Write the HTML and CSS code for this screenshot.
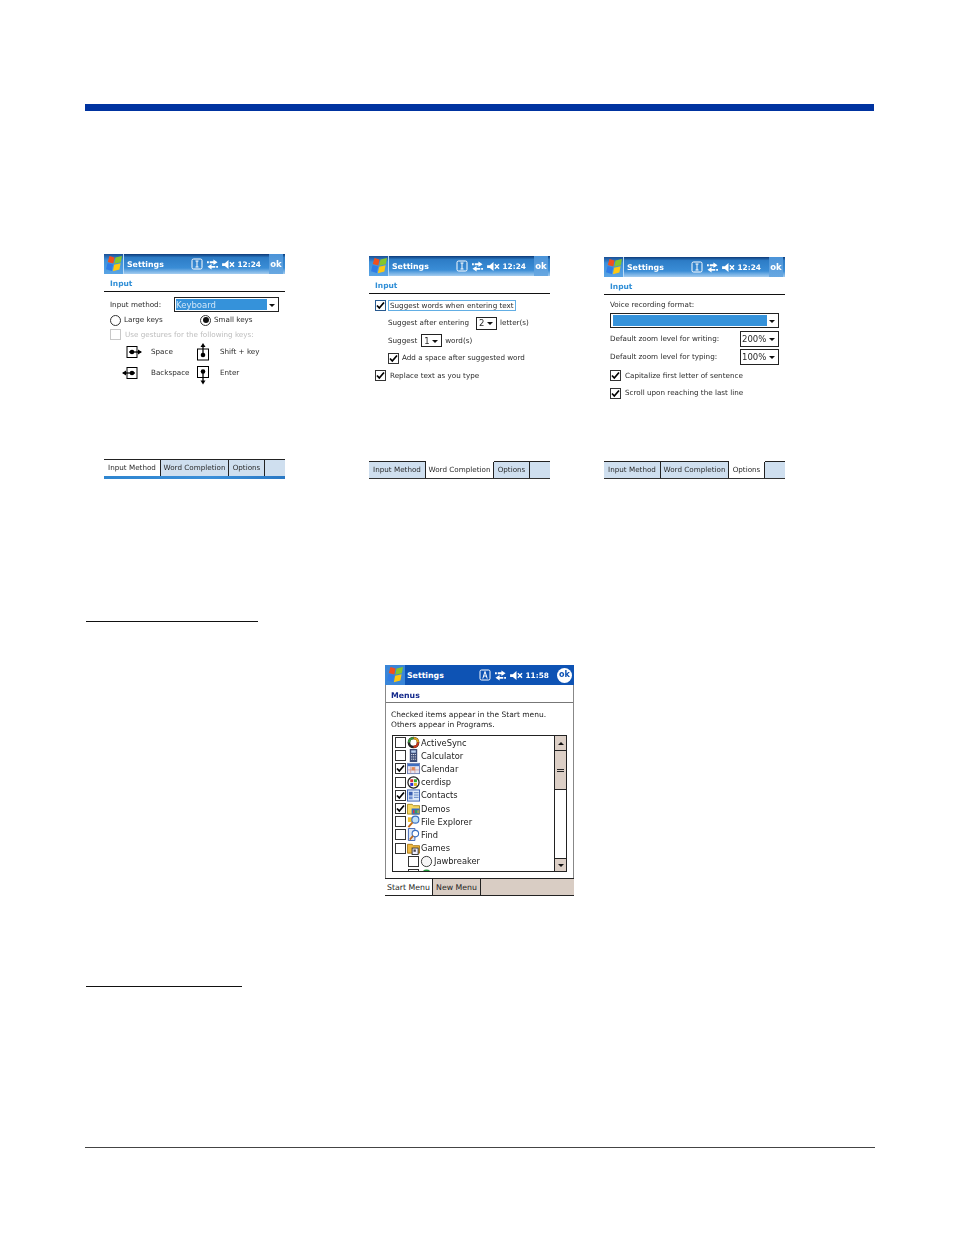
FILE: index.html
```html
<!DOCTYPE html>
<html lang="en">
<head>
<meta charset="utf-8">
<title>Settings</title>
<link rel="stylesheet" href="styles.css">
</head>
<body>
<svg class="defs" width="0" height="0" aria-hidden="true">
  <defs>
    <symbol id="flag" viewBox="0 0 16 16">
      <path d="M3.500 0 8.500 1.500 7.300 7.600 1.800 6Z" fill="#f0501e"/>
      <path d="M9.500 1.500 16 0 14.800 6.300 8.300 7.800Z" fill="#86c62a"/>
      <path d="M1.600 7 7.100 8.600 5.900 15 0 13.300Z" fill="#2f7ce6"/>
      <path d="M8.100 8.800 14.600 7.300 13.400 13.600 6.900 15.300Z" fill="#ffc810"/>
    </symbol>
    <symbol id="status-input" viewBox="0 0 12 12">
      <rect x="1" y="1" width="10" height="10" rx="1.500" fill="none" stroke="#fff"/>
      <path d="M4.500 3h3M6 3v6M4.500 9h3" stroke="#fff" fill="none"/>
    </symbol>
    <symbol id="status-a" viewBox="0 0 12 12">
      <rect x="1" y="1" width="10" height="10" rx="1.500" fill="none" stroke="#fff"/>
      <path d="M3.800 9.500 6 2.500l2.200 7M4.600 7h2.800" stroke="#fff" fill="none"/>
    </symbol>
    <symbol id="status-sync" viewBox="0 0 12 12">
      <path d="M3 2.500h4v2H3zM0 2.500h2v2H0zM7 .5l4.500 3-4.500 3z" fill="#fff"/>
      <path d="M5 7.500h4v2H5zM10 7.500h2v2h-2zM5 5.500.5 8.500l4.500 3z" fill="#fff"/>
    </symbol>
    <symbol id="status-sound" viewBox="0 0 14 12">
      <path d="M0 4.500h3L7 1v10L3 7.500H0z" fill="#fff"/>
      <path d="M8.500 3.500l4.500 5M13 3.500l-4.500 5" stroke="#fff" stroke-width="1.500" fill="none"/>
    </symbol>
    <symbol id="check" viewBox="0 0 11 11">
      <path d="M2 5.500 4.300 8 9 2.500" fill="none" stroke="#000" stroke-width="1.700"/>
    </symbol>
    <symbol id="g-space" viewBox="0 0 24 14">
      <rect x="6" y="1.500" width="10" height="11" fill="none" stroke="#000"/>
      <path d="M8 7h12" stroke="#000" stroke-width="1.300"/>
      <circle cx="11" cy="7" r="2.300"/><path d="M17 4.500 21 7l-4 2.500z"/>
    </symbol>
    <symbol id="g-back" viewBox="0 0 24 14">
      <rect x="6" y="1.500" width="10" height="11" fill="none" stroke="#000"/>
      <path d="M2 7h12" stroke="#000" stroke-width="1.300"/>
      <circle cx="11" cy="7" r="2.300"/><path d="M5 4.500 1 7l4 2.500z"/>
    </symbol>
    <symbol id="g-shift" viewBox="0 0 14 18">
      <rect x="1.500" y="6" width="11" height="11" fill="none" stroke="#000"/>
      <path d="M7 3v10" stroke="#000" stroke-width="1.300"/>
      <circle cx="7" cy="12" r="2.300"/><path d="M4.500 4 7 0l2.500 4z"/>
    </symbol>
    <symbol id="g-enter" viewBox="0 0 14 20">
      <rect x="1.500" y="1.500" width="11" height="11" fill="none" stroke="#000"/>
      <path d="M7 6v10" stroke="#000" stroke-width="1.300"/>
      <circle cx="7" cy="6.500" r="2.300"/><path d="M4.500 15.500 7 19.500l2.500-4z"/>
    </symbol>
    <symbol id="i-sync" viewBox="0 0 14 14">
      <circle cx="7" cy="7" r="6.300" fill="#222"/><circle cx="7" cy="7" r="3.500" fill="#fff"/>
      <path d="M7 1a6 6 0 0 1 6 6h-2.500A3.500 3.500 0 0 0 7 3.500z" fill="#e2a320"/>
      <path d="M1 7a6 6 0 0 1 6-6v2.500A3.500 3.500 0 0 0 3.500 7z" fill="#3e9a3e"/>
      <path d="M13 7a6 6 0 0 1-6 6v-2.500A3.500 3.500 0 0 0 10.500 7z" fill="#c8361c"/>
    </symbol>
    <symbol id="i-calc" viewBox="0 0 14 14">
      <rect x="3" y="0" width="8" height="14" fill="#3c4c78"/>
      <rect x="4.500" y="1.500" width="5" height="2.500" fill="#b8d0f0"/>
      <path d="M4.500 6h1.200M6.500 6h1.200M8.500 6h1M4.500 8.500h1.200M6.500 8.500h1.200M8.500 8.500h1M4.500 11h1.200M6.500 11h1.200M8.500 11h1" stroke="#fff"/>
    </symbol>
    <symbol id="i-cal" viewBox="0 0 14 14">
      <rect x="0.500" y="1.500" width="13" height="11" fill="#e6e6f4" stroke="#6f7fb4"/>
      <rect x="1" y="2" width="12" height="2.500" fill="#3f6fc0"/>
      <rect x="5" y="5.500" width="3.500" height="3.500" fill="#e88a50"/>
      <path d="M4 5v7M8.500 5v7M1 8.500h12" stroke="#d08a80" stroke-width=".7"/>
    </symbol>
    <symbol id="i-disp" viewBox="0 0 14 14">
      <circle cx="7" cy="7" r="6" fill="#fff" stroke="#222" stroke-width="1.400"/>
      <path d="M3.500 3.500h3.200v3.200H3.500z" fill="#d33"/><path d="M7.500 3.500h3.200v3.200H7.500z" fill="#3a3"/>
      <path d="M3.500 7.500h3.200v3.200H3.500z" fill="#33c"/><path d="M7.500 7.500h3.200v3.200H7.500z" fill="#db2"/>
    </symbol>
    <symbol id="i-contact" viewBox="0 0 14 14">
      <rect x=".5" y="1" width="13" height="12" fill="#dbe8f8" stroke="#3a5fb0"/>
      <rect x="2" y="3" width="4" height="4" fill="#3a5fb0"/><rect x="2" y="8" width="4" height="3" fill="#6f8fd0"/>
      <path d="M7.500 4h5M7.500 6.500h5M7.500 9h5" stroke="#5a7fc0"/>
    </symbol>
    <symbol id="i-folder" viewBox="0 0 14 14">
      <path d="M.5 2.500h5l1.500 1.500h6.500v9H.5z" fill="#f8d860" stroke="#a88a20"/>
      <rect x="5" y="7" width="8.500" height="6.500" fill="#3a6fc0"/>
      <path d="M6.500 9h1.500v3H6.500z" fill="#e33"/><path d="M9 9h1.500v3H9z" fill="#3b3"/><path d="M11.300 9h1.300v3h-1.300z" fill="#db2"/>
    </symbol>
    <symbol id="i-explore" viewBox="0 0 14 14">
      <path d="M1 2.500h5v5H1z" fill="#f2c230"/>
      <circle cx="9" cy="5" r="3.800" fill="#bfe0f8" stroke="#3a6fc0" stroke-width="1.200"/>
      <path d="M6 8 1.500 13" stroke="#c46a18" stroke-width="2"/>
    </symbol>
    <symbol id="i-find" viewBox="0 0 14 14">
      <path d="M1.500.5h7v13h-7z" fill="#dbe8f8" stroke="#3a5fb0"/>
      <circle cx="9" cy="6" r="3.500" fill="#fff" stroke="#3a6fc0" stroke-width="1.200"/>
      <path d="M6.500 8.500 3 12.500" stroke="#c46a18" stroke-width="1.800"/>
    </symbol>
    <symbol id="i-games" viewBox="0 0 14 14">
      <path d="M.5 2.500h5l1.500 1.500h6.500v8H.5z" fill="#f0b840" stroke="#a87818"/>
      <rect x="5.500" y="6.500" width="6.500" height="7" fill="#eef" stroke="#333"/>
      <rect x="7" y="8" width="2.500" height="2.500" fill="#445"/>
    </symbol>
    <symbol id="i-jaw" viewBox="0 0 14 14">
      <circle cx="7" cy="7" r="5.500" fill="#f6f6f6" stroke="#333"/>
    </symbol>
    <symbol id="i-green" viewBox="0 0 14 14">
      <circle cx="7" cy="7" r="5.500" fill="#1f9a3a"/>
    </symbol>
  </defs>
</svg>

<main class="page">
  <div class="top-bar"></div>

  <section class="shots">
    <article class="shot shot-one">
      <header class="title">
        <span class="start"><svg class="flag"><use href="#flag"/></svg></span>
        <span class="title-name">Settings</span>
        <span class="status">
          <svg class="st-box"><use href="#status-input"/></svg>
          <svg class="st-sync"><use href="#status-sync"/></svg>
          <svg class="st-sound"><use href="#status-sound"/></svg>
          <span class="clock">12:24</span>
        </span>
        <span class="ok">ok</span>
      </header>
      <div class="sub">Input</div>
      <div class="body body-one">
        <div class="row r-select">
          <span class="lbl-method">Input method:</span>
          <span class="select sel-method"><span class="sel-fill">Keyboard</span><i class="caret"></i></span>
        </div>
        <div class="row r-radio">
          <span class="radio-item radio-large"><i class="radio"></i>Large keys</span>
          <span class="radio-item"><i class="radio on"></i>Small keys</span>
        </div>
        <div class="row r-gest muted"><i class="box box-muted"></i>Use gestures for the following keys:</div>
        <div class="gestures">
          <svg class="g-h"><use href="#g-space"/></svg><span>Space</span>
          <svg class="g-shift"><use href="#g-shift"/></svg><span>Shift + key</span>
          <svg class="g-h"><use href="#g-back"/></svg><span>Backspace</span>
          <svg class="g-enter"><use href="#g-enter"/></svg><span>Enter</span>
        </div>
      </div>
      <nav class="tabs tabs-one">
        <span class="tab t-a active">Input Method</span><span class="tab t-b">Word Completion</span><span class="tab t-c">Options</span>
      </nav>
      <div class="blue-strip"></div>
    </article>

    <article class="shot shot-two">
      <header class="title">
        <span class="start"><svg class="flag"><use href="#flag"/></svg></span>
        <span class="title-name">Settings</span>
        <span class="status">
          <svg class="st-box"><use href="#status-input"/></svg>
          <svg class="st-sync"><use href="#status-sync"/></svg>
          <svg class="st-sound"><use href="#status-sound"/></svg>
          <span class="clock">12:24</span>
        </span>
        <span class="ok">ok</span>
      </header>
      <div class="sub">Input</div>
      <div class="body body-two">
        <div class="row r-17 r-first"><i class="box box-focus"><svg class="tick"><use href="#check"/></svg></i><span class="focus-label">Suggest words when entering text</span></div>
        <div class="row r-17 in-13">Suggest after entering<span class="select sel-num sel-a">2<i class="caret"></i></span>letter(s)</div>
        <div class="row r-17 in-13">Suggest<span class="select sel-num sel-b">1<i class="caret"></i></span>word(s)</div>
        <div class="row r-17 in-13"><i class="box"><svg class="tick"><use href="#check"/></svg></i>Add a space after suggested word</div>
        <div class="row r-17"><i class="box"><svg class="tick"><use href="#check"/></svg></i>Replace text as you type</div>
      </div>
      <nav class="tabs">
        <span class="tab t-a">Input Method</span><span class="tab t-b active">Word Completion</span><span class="tab t-c">Options</span>
      </nav>
    </article>

    <article class="shot shot-three">
      <header class="title">
        <span class="start"><svg class="flag"><use href="#flag"/></svg></span>
        <span class="title-name">Settings</span>
        <span class="status">
          <svg class="st-box"><use href="#status-input"/></svg>
          <svg class="st-sync"><use href="#status-sync"/></svg>
          <svg class="st-sound"><use href="#status-sound"/></svg>
          <span class="clock">12:24</span>
        </span>
        <span class="ok">ok</span>
      </header>
      <div class="sub">Input</div>
      <div class="body body-three">
        <div class="voice-label">Voice recording format:</div>
        <span class="select sel-voice"><span class="sel-fill"></span><i class="caret"></i></span>
        <div class="row r-zoom">Default zoom level for writing:<span class="select sel-zoom">200%<i class="caret"></i></span></div>
        <div class="row r-zoom">Default zoom level for typing:<span class="select sel-zoom">100%<i class="caret"></i></span></div>
        <div class="row r-17 r-cap"><i class="box"><svg class="tick"><use href="#check"/></svg></i>Capitalize first letter of sentence</div>
        <div class="row r-17"><i class="box"><svg class="tick"><use href="#check"/></svg></i>Scroll upon reaching the last line</div>
      </div>
      <nav class="tabs">
        <span class="tab t-a">Input Method</span><span class="tab t-b">Word Completion</span><span class="tab t-c active">Options</span>
      </nav>
    </article>
  </section>

  <div class="rule rule-a"></div>

  <article class="menus">
    <header class="m-title">
      <span class="m-start"><svg class="flag"><use href="#flag"/></svg></span>
      <span class="m-name">Settings</span>
      <span class="status m-status">
        <svg class="st-box"><use href="#status-a"/></svg>
        <svg class="st-sync"><use href="#status-sync"/></svg>
        <svg class="st-sound"><use href="#status-sound"/></svg>
        <span class="clock">11:58</span>
      </span>
      <span class="m-ok">ok</span>
    </header>
    <div class="m-sub">Menus</div>
    <p class="m-text">Checked items appear in the Start menu.<br>Others appear in Programs.</p>
    <div class="listbox">
      <ul class="items">
        <li><i class="box"></i><svg class="ic"><use href="#i-sync"/></svg>ActiveSync</li>
        <li><i class="box"></i><svg class="ic"><use href="#i-calc"/></svg>Calculator</li>
        <li><i class="box"><svg class="tick"><use href="#check"/></svg></i><svg class="ic"><use href="#i-cal"/></svg>Calendar</li>
        <li><i class="box"></i><svg class="ic"><use href="#i-disp"/></svg>cerdisp</li>
        <li><i class="box"><svg class="tick"><use href="#check"/></svg></i><svg class="ic"><use href="#i-contact"/></svg>Contacts</li>
        <li><i class="box"><svg class="tick"><use href="#check"/></svg></i><svg class="ic"><use href="#i-folder"/></svg>Demos</li>
        <li><i class="box"></i><svg class="ic"><use href="#i-explore"/></svg>File Explorer</li>
        <li><i class="box"></i><svg class="ic"><use href="#i-find"/></svg>Find</li>
        <li><i class="box"></i><svg class="ic"><use href="#i-games"/></svg>Games</li>
        <li class="nested"><i class="box"></i><svg class="ic"><use href="#i-jaw"/></svg>Jawbreaker</li>
        <li class="nested"><i class="box"></i><svg class="ic"><use href="#i-green"/></svg></li>
      </ul>
      <div class="scrollbar">
        <span class="sb-btn"><i class="sb-up"></i></span>
        <span class="sb-thumb"><i class="sb-grip"></i></span>
        <span class="sb-track"></span>
        <span class="sb-btn sb-end"><i class="sb-down"></i></span>
      </div>
    </div>
    <nav class="m-tabs">
      <span class="m-tab m-active">Start Menu</span><span class="m-tab">New Menu</span>
    </nav>
  </article>

  <div class="rule rule-b"></div>
  <div class="foot-rule"></div>
</main>
</body>
</html>
```

FILE: styles.css
```css
* { box-sizing: border-box; }
html, body { margin: 0; padding: 0; background: #fff; }
body { width: 954px; height: 1235px; overflow: hidden; font-family: "DejaVu Sans", sans-serif; color: #2a2a2a; }
.defs { position: absolute; }
.page { display: flex; flex-direction: column; }

.top-bar { margin: 104px 0 0 85px; width: 789px; height: 7px; background: #0033a0; }

.shots { margin: 143px 0 0 104px; height: 225px; display: flex; align-items: flex-end; }
.shot { width: 181px; display: flex; flex-direction: column; background: #fff; font-size: 7.200px; line-height: 10px; filter: blur(.3px); }
.shot-one { height: 225px; }
.shot-two { height: 223px; margin-left: 84px; }
.shot-three { height: 222px; margin-left: 54px; }

.title { height: 20px; flex: none; display: flex; align-items: center; color: #fff; font-weight: bold;
  background: linear-gradient(#0d3a78 0, #2d7cc6 18%, #3a8dd6 70%, #a5cdf0 100%); }
.start { width: 20px; height: 100%; display: flex; align-items: center; justify-content: center; border-right: 1px solid #bcdcf6;
  background: linear-gradient(#1a4f94 0, #3c8fda 30%, #5aa4e4 100%); flex: none; }
.flag { width: 16px; height: 16px; }
.title-name { margin: 2px 0 0 3px; font-size: 7.800px; }
.status { margin-left: auto; display: flex; align-items: center; font-size: 7.400px; }
.st-box { width: 12px; height: 12px; }
.st-sync { width: 11px; height: 11px; margin-left: 4px; }
.st-sound { width: 13px; height: 11px; margin-left: 4px; }
.clock { margin: 2px 0 0 2px; }
.ok { width: 14px; height: 100%; margin: 0 2px 0 8px; display: flex; align-items: center; justify-content: center; font-size: 8.500px;
  background: linear-gradient(#4a93d8, #68a8e2); }

.sub { height: 18px; padding: 2px 0 0 6px; display: flex; align-items: center; border-bottom: 1px solid #111;
  color: #2f8ed6; font-weight: bold; font-size: 7.500px; flex: none; }
.body { flex: 1; padding-left: 6px; }
.row { display: flex; align-items: center; }

.box { position: relative; width: 11px; height: 11px; border: 1px solid #333; background: #fff; display: inline-block; flex: none; }
.box-muted { border-color: #c8c8c8; margin-right: 4px; }
.box-focus { border-color: #285a90; }
.tick { position: absolute; left: -1px; top: -1px; width: 11px; height: 11px; }
.select { position: relative; display: inline-flex; align-items: center; border: 1px solid #222; background: #fff; flex: none; }
.caret { position: absolute; right: 3px; top: 50%; margin-top: -1px; width: 0; height: 0;
  border: 3px solid transparent; border-top: 3px solid #111; border-bottom: 0; }
.sel-fill { background: #3592da; color: #cfe6f8; height: 100%; display: flex; align-items: center; font-size: 8.500px; }

/* shot 1 */
.body-one { padding-top: 5px; }
.r-select { height: 15px; }
.lbl-method { width: 64px; }
.sel-method { width: 105px; height: 15px; padding: 1px 0 1px 1px; }
.sel-method .sel-fill { width: 91px; }
.r-radio { height: 16px; }
.radio-item { display: flex; align-items: center; gap: 3px; }
.radio-large { width: 90px; }
.radio { position: relative; width: 11px; height: 11px; border: 1px solid #333; border-radius: 50%; display: block; }
.radio.on::after { content: ""; position: absolute; inset: 1.500px; background: #111; border-radius: 50%; }
.r-gest { height: 13px; }
.muted { color: #bdbdbd; }
.gestures { display: grid; grid-template-columns: 30px 45px 24px auto; grid-auto-rows: 21px; align-items: center; margin: 0 0 0 11px; }
.g-h { width: 24px; height: 14px; }
.g-shift { width: 14px; height: 18px; }
.g-enter { width: 14px; height: 20px; margin-top: 4px; }

/* shot 2 */
.body-two { padding-top: 3px; }
.r-17 { height: 17.500px; }
.r-first { gap: 2px; }
.focus-label { border: 1px solid #62aee4; padding: 0 1px; height: 11px; display: flex; align-items: center; }
.in-13 { padding-left: 13px; }
.in-13 .box { margin-right: 3px; }
.body-two > .row:last-child .box, .body-three .r-17 .box { margin-right: 4px; }
.sel-num { width: 21px; height: 13px; padding-left: 2px; font-size: 8.500px; }
.sel-a { margin: 0 3px 0 7px; }
.sel-b { margin: 0 3px 0 4px; }

/* shot 3 */
.body-three { padding: 5px 6px 0; }
.voice-label { height: 10px; display: flex; align-items: center; }
.sel-voice { width: 169px; height: 15px; margin-top: 3px; padding: 1px 0 1px 2px; display: flex; }
.sel-voice .sel-fill { width: 154px; }
.r-zoom { justify-content: space-between; height: 17px; margin-top: 2px; }
.r-zoom + .r-zoom { margin-top: 1px; }
.sel-zoom { width: 39px; height: 16px; padding-left: 1px; font-size: 8.500px; }
.r-cap { margin-top: 2px; }

/* tabs */
.tabs { height: 18px; display: flex; flex: none; background: #cfdfef; border-top: 1px solid #222; border-bottom: 1px solid #333; }
.tab { display: flex; align-items: center; justify-content: center; border-right: 1px solid #222; height: 100%; }
.tab.active { background: #fff; box-shadow: 0 -1px 0 #fff; }
.t-a { width: 57px; }
.t-b { width: 68px; }
.t-c { width: 36px; }
.tabs-one { height: 17px; border-bottom: 0; }
.tabs-one .active { box-shadow: none; }
.blue-strip { height: 3px; background: linear-gradient(90deg, #2f86d0, #3a8ed8 60%, #2a78c4); flex: none; }

/* rules */
.rule { height: 1px; background: #111; }
.rule-a { margin: 142px 0 0 86px; width: 172px; }
.rule-b { margin: 90px 0 0 86px; width: 156px; }
.foot-rule { margin: 160px 0 0 85px; width: 790px; height: 1px; background: #444; }

/* menus */
.menus { margin: 43px 0 0 385px; width: 189px; height: 231px; display: flex; flex-direction: column; border: solid #888; border-width: 0 1px; font-size: 7.500px; line-height: 10px; color: #222; filter: blur(.3px); }
.m-title { height: 20px; flex: none; display: flex; align-items: center; background: #0e53b4; color: #fff; font-weight: bold; margin: 0 -1px; }
.m-start { width: 20px; height: 100%; background: #3a86d8; display: flex; align-items: center; justify-content: center; flex: none; }
.m-name { margin: 2px 0 0 2px; font-size: 7.800px; }
.m-ok { width: 15px; height: 15px; margin: 0 2px 0 8px; border-radius: 50%; background: #fff; color: #0e53b4; display: flex; align-items: center; justify-content: center; font-size: 8px; }
.m-sub { height: 18px; flex: none; padding: 4px 0 0 5px; display: flex; align-items: center; border-bottom: 1px solid #777; color: #142a8c; font-weight: bold; font-size: 7.800px; }
.m-text { margin: 7px 0 0 5px; }
.listbox { margin: 5px 0 0 6px; width: 175px; height: 137px; border: 1px solid #222; display: flex; flex: none; background: #fff; }
.items { list-style: none; margin: 0; padding: 0 0 0 2px; flex: 1; overflow: hidden; font-size: 8.300px; }
.items li { height: 13.200px; display: flex; align-items: center; }
.items .nested { padding-left: 13px; }
.items .box { margin-right: 1px; }
.ic { width: 13px; height: 13px; margin-right: 1px; flex: none; }
.scrollbar { width: 12px; border-left: 1px solid #222; display: flex; flex-direction: column; flex: none; }
.sb-btn { height: 15px; background: #dccfc6; border-bottom: 1px solid #222; display: flex; align-items: center; justify-content: center; flex: none; }
.sb-end { border-bottom: 0; border-top: 1px solid #222; height: 13px; }
.sb-up { border: 3px solid transparent; border-bottom: 3px solid #111; border-top: 0; }
.sb-down { border: 3px solid transparent; border-top: 3px solid #111; border-bottom: 0; }
.sb-thumb { height: 39px; background: #dccfc6; border-bottom: 1px solid #222; display: flex; align-items: center; justify-content: center; flex: none; }
.sb-grip { width: 7px; height: 3px; border: solid #222; border-width: 1px 0; }
.sb-track { flex: 1; background: #fff; }
.m-tabs { margin: 6px -1px 0; height: 18px; flex: none; display: flex; background: #d9cdc4; border-top: 1px solid #222; border-bottom: 1px solid #222; font-size: 7.800px; }
.m-tab { display: flex; align-items: center; justify-content: center; width: 48px; border-right: 1px solid #222; padding-top: 2px; }
.m-active { background: #fff; }
```
